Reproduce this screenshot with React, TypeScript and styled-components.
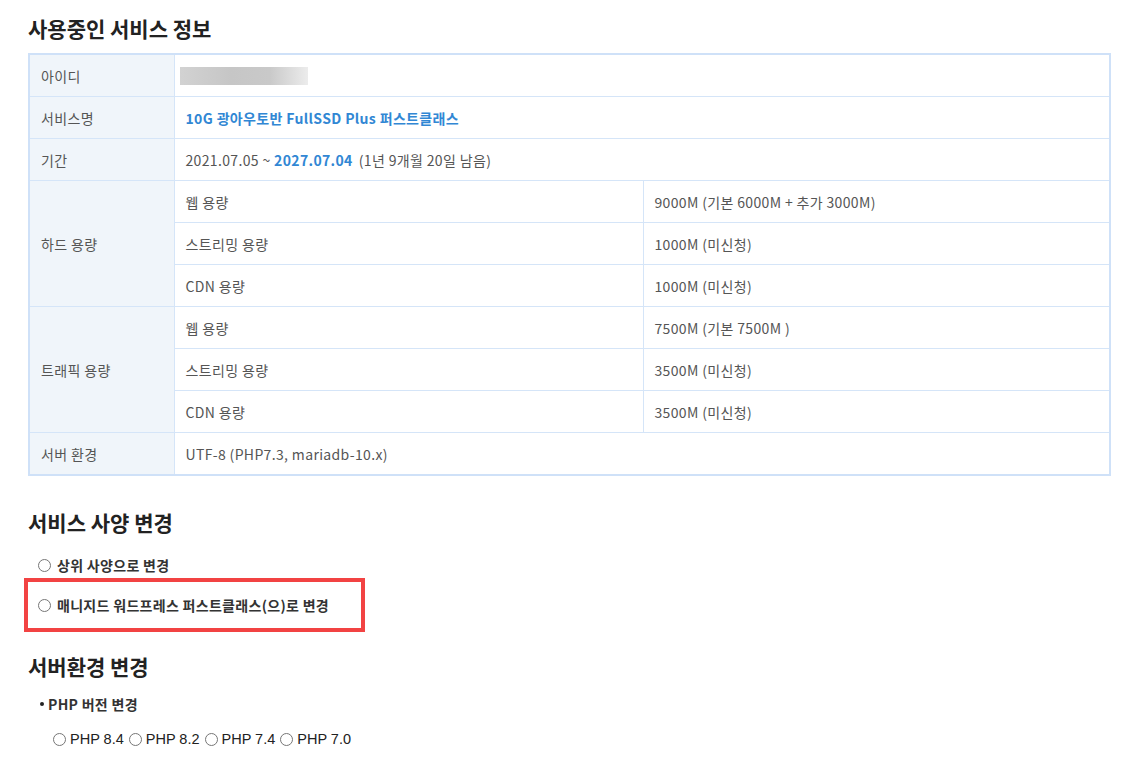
import React from "react";
import styled, { createGlobalStyle } from "styled-components";

const Global = createGlobalStyle`
  html, body { margin: 0; padding: 0; background: #fff; }
  body { font-family: "Noto Sans CJK KR", "Noto Sans", sans-serif; color: #333; }
`;

const Page = styled.div`
  padding: 14px 17px 20px 28px;
`;

const Heading = styled.h2<{ $top?: number }>`
  margin: ${(p) => p.$top ?? 0}px 0 0 0;
  font-size: 21px;
  line-height: 28px;
  font-weight: 700;
  color: #222;
`;

const Table = styled.table`
  margin-top: 11px;
  width: 1083px;
  border-collapse: collapse;
  border: 2px solid #cfe1f8;
  font-size: 14px;
  letter-spacing: 0.35px;
  color: #555;
  table-layout: fixed;
`;

const Th = styled.th`
  background: #f0f5fa;
  border: 1px solid #d5e5f8;
  text-align: left;
  font-weight: 400;
  padding: 0 11px;
  height: 41px;
`;

const Td = styled.td`
  border: 1px solid #d5e5f8;
  padding: 0 11px;
  height: 41px;
`;

const Blue = styled.span`
  color: #3187d4;
  font-weight: 700;
`;

const Muted = styled.span`
  margin-left: 6px;
`;

const Blurred = styled.div`
  margin-left: -6px;
  width: 128px;
  height: 18px;
  background: linear-gradient(90deg, #d2d2d2 0%, #c6c6c6 40%, #c9c9c9 70%, #ececec 100%);
`;

const Options = styled.div`
  margin-top: 18px;
  display: flex;
  flex-direction: column;
`;

const OptionRow = styled.label`
  display: flex;
  align-items: center;
  padding-left: 10px;
  height: 22px;
  font-size: 14px;
  letter-spacing: 0.3px;
  font-weight: 700;
  color: #333;
`;

const Radio = styled.input.attrs({ type: "radio" })`
  margin: 0 6px 0 0;
  width: 13px;
  height: 13px;
`;

const Highlight = styled.div`
  margin-top: 2px;
  margin-left: -4px;
  width: 333px;
  border: 4px solid #f24343;
  padding: 12px 0;
`;

const SubTitle = styled.div`
  margin-top: 14px;
  padding-left: 12px;
  display: flex;
  align-items: center;
  font-size: 14px;
  letter-spacing: 0.3px;
  font-weight: 700;
  color: #333;
  &::before {
    content: "";
    width: 4px;
    height: 4px;
    border-radius: 50%;
    background: #222;
    margin-right: 4px;
  }
`;

const PhpRow = styled.div`
  margin-top: 17px;
  padding-left: 20px;
  display: flex;
  align-items: center;
  font-family: "Liberation Sans", Arial, sans-serif;
  font-size: 14.5px;
  color: #222;
`;

const PhpLabel = styled.label`
  display: flex;
  align-items: center;
`;

const PhpRadio = styled.input.attrs({ type: "radio" })`
  margin: 0 4px 0 5px;
  width: 13px;
  height: 13px;
`;

export default function App() {
  return (
    <Page>
      <Global />
      <Heading>사용중인 서비스 정보</Heading>
      <Table>
        <colgroup>
          <col style={{ width: 145 }} />
          <col style={{ width: 469 }} />
          <col />
        </colgroup>
        <tbody>
          <tr>
            <Th>아이디</Th>
            <Td colSpan={2}>
              <Blurred />
            </Td>
          </tr>
          <tr>
            <Th>서비스명</Th>
            <Td colSpan={2}>
              <Blue>10G 광아우토반 FullSSD Plus 퍼스트클래스</Blue>
            </Td>
          </tr>
          <tr>
            <Th>기간</Th>
            <Td colSpan={2}>
              2021.07.05 ~ <Blue>2027.07.04</Blue>
              <Muted>(1년 9개월 20일 남음)</Muted>
            </Td>
          </tr>
          <tr>
            <Th rowSpan={3}>하드 용량</Th>
            <Td>웹 용량</Td>
            <Td>9000M (기본 6000M + 추가 3000M)</Td>
          </tr>
          <tr>
            <Td>스트리밍 용량</Td>
            <Td>1000M (미신청)</Td>
          </tr>
          <tr>
            <Td>CDN 용량</Td>
            <Td>1000M (미신청)</Td>
          </tr>
          <tr>
            <Th rowSpan={3}>트래픽 용량</Th>
            <Td>웹 용량</Td>
            <Td>7500M (기본 7500M )</Td>
          </tr>
          <tr>
            <Td>스트리밍 용량</Td>
            <Td>3500M (미신청)</Td>
          </tr>
          <tr>
            <Td>CDN 용량</Td>
            <Td>3500M (미신청)</Td>
          </tr>
          <tr>
            <Th>서버 환경</Th>
            <Td colSpan={2}>UTF-8 (PHP7.3, mariadb-10.x)</Td>
          </tr>
        </tbody>
      </Table>

      <Heading $top={32}>서비스 사양 변경</Heading>
      <Options>
        <OptionRow>
          <Radio name="spec" />
          상위 사양으로 변경
        </OptionRow>
        <Highlight>
          <OptionRow>
            <Radio name="spec" />
            매니지드 워드프레스 퍼스트클래스(으)로 변경
          </OptionRow>
        </Highlight>
      </Options>

      <Heading $top={20}>서버환경 변경</Heading>
      <SubTitle>PHP 버전 변경</SubTitle>
      <PhpRow>
        {["PHP 8.4", "PHP 8.2", "PHP 7.4", "PHP 7.0"].map((v) => (
          <PhpLabel key={v}>
            <PhpRadio name="php" />
            {v}
          </PhpLabel>
        ))}
      </PhpRow>
    </Page>
  );
}
